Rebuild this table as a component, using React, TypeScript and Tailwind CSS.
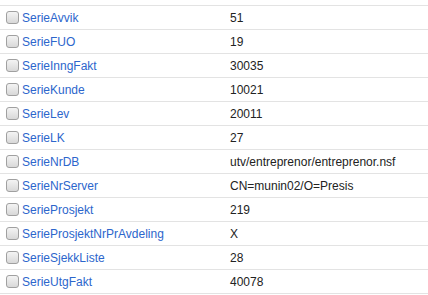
const rows: [string, string][] = [
  ['SerieAvvik', '51'],
  ['SerieFUO', '19'],
  ['SerieInngFakt', '30035'],
  ['SerieKunde', '10021'],
  ['SerieLev', '20011'],
  ['SerieLK', '27'],
  ['SerieNrDB', 'utv/entreprenor/entreprenor.nsf'],
  ['SerieNrServer', 'CN=munin02/O=Presis'],
  ['SerieProsjekt', '219'],
  ['SerieProsjektNrPrAvdeling', 'X'],
  ['SerieSjekkListe', '28'],
  ['SerieUtgFakt', '40078'],
];

export default function App() {
  return (
    <div className="w-[428px] h-[295px] bg-white pt-[5px] font-['Liberation_Sans',Arial,sans-serif] text-[12px] leading-[20px]">
      <div className="border-b border-[#e3e3e3]">
        {rows.map(([name, value]) => (
          <div key={name} className="flex items-center h-[24px] border-t border-[#e3e3e3]">
            <div className="flex items-center w-[230px] shrink-0 pl-[6px]">
              <span className="w-[13px] h-[13px] rounded-[3px] border border-[#a0a0a0] bg-gradient-to-b from-[#f4f4f4] to-[#d8d8d8] shrink-0" />
              <a href="#" className="ml-[3px] text-[#2c66cc]">{name}</a>
            </div>
            <div className="text-[#222] whitespace-nowrap">{value}</div>
          </div>
        ))}
      </div>
    </div>
  );
}
